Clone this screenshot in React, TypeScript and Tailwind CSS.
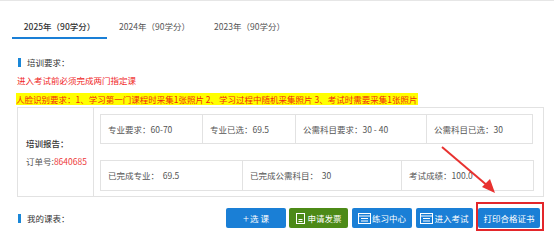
import React from 'react';

const tabs = ['2025年（90学分）', '2024年（90学分）', '2023年（90学分）'];

const rowOne = [
  { label: '专业要求：60-70', w: 'w-[103px]' },
  { label: '专业已选：69.5', w: 'w-[94px]' },
  { label: '公需科目要求：30 - 40', w: 'w-[132px]' },
  { label: '公需科目已选：30', w: 'w-[107px]' },
];

const rowTwo = [
  { label: '已完成专业：  69.5', w: 'w-[143px]' },
  { label: '已完成公需科目：  30', w: 'w-[160px]' },
  { label: '考试成绩：100.0', w: 'w-[133px]' },
];

const DocIcon = () => (
  <svg width="11" height="11" viewBox="0 0 11 11" fill="none" stroke="white" strokeWidth="1">
    <rect x="1.5" y="0.5" width="8" height="10" />
    <path d="M3.5 6.5h4M3.5 8.5h4" />
  </svg>
);

const BoxIcon = () => (
  <svg width="13" height="11" viewBox="0 0 13 11" fill="none" stroke="white" strokeWidth="1">
    <rect x="0.5" y="0.5" width="12" height="10" />
    <path d="M0.5 3h12M3 5.5h7M3 8h7" />
  </svg>
);

const SectionTitle = ({ text }: { text: string }) => (
  <div className="flex items-center gap-[6px] pl-[18px] h-[12px]">
    <span className="w-[3px] h-[9px] bg-[#1a87d8]" />
    <span className="text-[#333] leading-[12px]">{text}</span>
  </div>
);

export default function App() {
  return (
    <div
      className="relative w-[554px] h-[234px] bg-white border-t border-[#e6e6e6] text-[8.5px] overflow-hidden"
      style={{ fontFamily: '"Noto Sans CJK SC", "Noto Sans", sans-serif' }}
    >
      <div className="flex pl-[12px]">
        {tabs.map((t, i) => (
          <div
            key={t}
            className={`w-[95px] pt-[19px] pb-[5px] text-center leading-[12px] text-[8.5px] border-b-2 ${
              i === 0 ? 'border-[#1a7fd6] text-[#333] font-medium' : 'border-transparent text-[#555]'
            }`}
          >
            {t}
          </div>
        ))}
      </div>

      <div className="mt-[17px]">
        <SectionTitle text="培训要求：" />
      </div>

      <div className="mt-[6px] pl-[17px] leading-[12px] text-[#f01e1e]">进入考试前必须完成两门指定课</div>

      <div className="mt-[7px] pl-[16px] h-[13px]">
        <span className="inline-block bg-[#ffff00] leading-[12px] text-[#f02a10] pr-[1px]">
          人脸识别要求：1、学习第一门课程时采集1张照片 2、学习过程中随机采集照片 3、考试时需要采集1张照片
        </span>
      </div>

      <div className="ml-[17px] mt-[1px] w-[527px] h-[90px] border border-[#e2e2e2] flex">
        <div className="w-[76px] border-r border-[#e2e2e2] flex flex-col justify-center pl-[8px] gap-[6px] leading-[12px]">
          <div className="text-[#333] font-medium">培训报告：</div>
          <div className="text-[#555]">
            订单号:<span className="text-[#ee3b3b]">8640685</span>
          </div>
        </div>
        <div className="pl-[6px] pt-[6px] flex flex-col gap-[16px]">
          <div className="flex">
            {rowOne.map((c, i) => (
              <div
                key={c.label}
                className={`${c.w} h-[30px] border border-[#e2e2e2] ${i > 0 ? '-ml-px' : ''} flex items-center pl-[7px] text-[#555] whitespace-pre`}
              >
                {c.label}
              </div>
            ))}
          </div>
          <div className="flex">
            {rowTwo.map((c, i) => (
              <div
                key={c.label}
                className={`${c.w} h-[31px] border border-[#e2e2e2] ${i > 0 ? '-ml-px' : ''} flex items-center pl-[7px] text-[#555] whitespace-pre`}
              >
                {c.label}
              </div>
            ))}
          </div>
        </div>
      </div>

      <div className="mt-[11px] flex items-center h-[20px]">
        <SectionTitle text="我的课表：" />
        <div className="ml-auto mr-[14px] flex gap-[3px] text-white text-[8.5px]">
          <button className="w-[60px] h-[20px] bg-[#1a7fd6] rounded-[2px] flex items-center justify-center gap-[1px]">
            <span className="text-[11px] leading-none font-light">+</span>
            <span>选 课</span>
          </button>
          <button className="w-[59px] h-[20px] bg-[#4c8a17] rounded-[2px] flex items-center justify-center gap-[1px]">
            <DocIcon />
            <span>申请发票</span>
          </button>
          <button className="ml-[1px] w-[60px] h-[20px] bg-[#1a7fd6] rounded-[2px] flex items-center justify-center gap-[1px]">
            <BoxIcon />
            <span>练习中心</span>
          </button>
          <button className="ml-[1px] w-[57px] h-[20px] bg-[#1a7fd6] rounded-[2px] flex items-center justify-center gap-[1px]">
            <BoxIcon />
            <span>进入考试</span>
          </button>
          <div className="relative ml-[2px]">
            <button className="w-[62px] h-[20px] bg-[#1a7fd6] rounded-[2px] flex items-center justify-center">
              打印合格证书
            </button>
            <div className="absolute -left-[2px] -right-[4px] -top-[6px] -bottom-[3px] border-2 border-[#e3262a]" />
          </div>
        </div>
      </div>

      <svg className="absolute left-0 top-0 pointer-events-none" width="554" height="234">
        <line x1="442" y1="146" x2="489" y2="186" stroke="#e8312f" strokeWidth="2" />
        <polygon points="495,192 482,186 490,178" fill="#e8312f" />
      </svg>
    </div>
  );
}
